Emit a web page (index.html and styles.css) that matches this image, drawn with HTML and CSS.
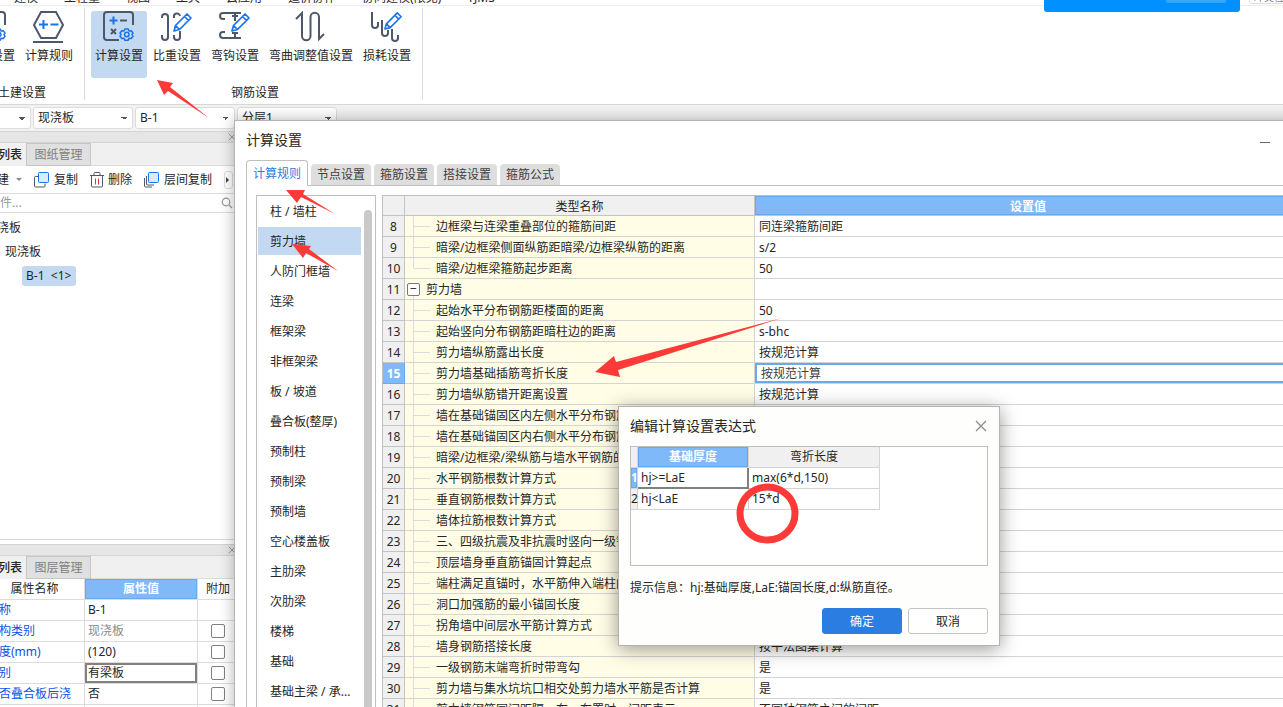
FILE: index.html
```html
<!DOCTYPE html>
<html lang="zh-CN">
<head>
<meta charset="utf-8">
<title>计算设置</title>
<link rel="stylesheet" href="styles.css">
</head>
<body>
<svg class="defs" aria-hidden="true">
  <defs>
    <symbol id="i-calc" viewBox="0 0 32 32">
      <g fill="none" stroke="#4e586b" stroke-width="2">
        <path d="M30 14V4a3 3 0 0 0-3-3H4a3 3 0 0 0-3 3v22a3 3 0 0 0 3 3h12"/>
        <path d="M17 9.500h7M8 18l5 5M13 18l-5 5"/>
      </g>
      <path d="M10.500 5.500v8M6.500 9.500h8" stroke="#1a73e8" stroke-width="2"/>
      <g fill="none" stroke="#1a73e8" stroke-width="1.500">
        <path d="M23.500 18l1.600 0 1 2 2.200-.3 1.700 2.300-1 1.500 1 1.700-1.700 2.300-2.200-.2-1 2h-3.200l-1-2-2.200.2-1.700-2.300 1-1.700-1-1.500 1.700-2.300 2.200.3 1-2z"/>
        <circle cx="23.800" cy="23.500" r="2.200"/>
      </g>
    </symbol>
    <symbol id="i-rule" viewBox="0 0 32 32">
      <path d="M8 1h15l7 13-7 13H8L1 14z" fill="none" stroke="#4e586b" stroke-width="2"/>
      <path d="M0 31h30" stroke="#4e586b" stroke-width="2"/>
      <path d="M6 13.500h9M10.500 9v9M17.500 13.500h8" stroke="#1a73e8" stroke-width="2"/>
    </symbol>
    <symbol id="i-pen" viewBox="0 0 20 20">
      <path d="M1 19l1.500-5.500L14 2l4 4L6.500 17.500z M11.500 4.500l4 4 M2.500 13.500l4 4" fill="#fff" stroke="#1a73e8" stroke-width="1.700" stroke-linejoin="round"/>
    </symbol>
    <symbol id="i-weight" viewBox="0 0 32 32">
      <path d="M1 7V6a3 3 0 0 1 6 0v20a3 3 0 0 1-6 0v-2M13 7V6a3 3 0 0 1 6-1M13 24v2a3 3 0 0 0 6 0v-6" fill="none" stroke="#4e586b" stroke-width="2"/>
      <use href="#i-pen" x="12" y="1" width="20" height="20"/>
    </symbol>
    <symbol id="i-hook" viewBox="0 0 32 32">
      <path d="M6 8H4a3 3 0 0 1 0-6h18M6 21H4a3 3 0 0 0 0 6h18M16 3v7M13 5h6M16 22v5M13 22h6" fill="none" stroke="#4e586b" stroke-width="2"/>
      <use href="#i-pen" x="12" y="1" width="20" height="20"/>
    </symbol>
    <symbol id="i-bend" viewBox="0 0 32 32">
      <path d="M1 8l6-6v23a4 4 0 0 0 8.500 0V6a4 4 0 0 1 8.500 0v22l5-5" fill="none" stroke="#4e586b" stroke-width="2"/>
    </symbol>
    <symbol id="i-loss" viewBox="0 0 32 32">
      <path d="M1 1v13a3 3 0 0 0 6 0v-3M11 9v13a3 3 0 0 0 6 0v-3M21 18v9a3 3 0 0 0 6 0v-3" fill="none" stroke="#4e586b" stroke-width="2"/>
      <use href="#i-pen" x="13" y="0" width="19" height="19"/>
    </symbol>
    <symbol id="i-copy" viewBox="0 0 16 16">
      <path d="M4 4.500H1.500a1 1 0 0 0-1 1V14a1 1 0 0 0 1 1H10a1 1 0 0 0 1-1v-2.500" fill="none" stroke="#4e586b"/>
      <rect x="4.500" y=".5" width="10" height="10" rx="1" fill="#dbeafc" stroke="#1a73e8"/>
    </symbol>
    <symbol id="i-copies" viewBox="0 0 16 16">
      <path d="M.5 6v8a1 1 0 0 0 1 1H8M2.500 4v8a1 1 0 0 0 1 1H10" fill="none" stroke="#4e586b"/>
      <rect x="4.500" y=".5" width="10" height="10" rx="1" fill="#dbeafc" stroke="#1a73e8"/>
    </symbol>
    <symbol id="i-trash" viewBox="0 0 14 16">
      <path d="M0 3.500h14M4 3V1.500a1 1 0 0 1 1-1h4a1 1 0 0 1 1 1V3M1.500 3.500V14a1 1 0 0 0 1 1h9a1 1 0 0 0 1-1V3.500" fill="none" stroke="#4e586b"/>
      <path d="M5.500 6.500v6M8.500 6.500v6" stroke="#e03535"/>
    </symbol>
    <symbol id="i-close" viewBox="0 0 12 12">
      <path d="M1 1l10 10M11 1L1 11" stroke="#8a8a8a" stroke-width="1.200"/>
    </symbol>
  </defs>
</svg>

<div class="app">
  <nav class="menu">
    <span>建模</span><span>工程量</span><span>视图</span><span>工具</span><span>云应用</span><span>造价协作</span><span>协同建模(限免)</span><span>YJMS</span>
  </nav>
  <div class="promo"><span></span></div>
  <div class="promo-tag">冲突检</div>

  <div class="ribbon">
    <section class="group">
      <div class="tools">
        <button class="tool"><svg><use href="#i-calc"/></svg>计算设置</button>
        <button class="tool"><svg><use href="#i-rule"/></svg>计算规则</button>
      </div>
      <h2 class="group-title">土建设置</h2>
    </section>
    <section class="group">
      <div class="tools">
        <button class="tool on"><svg><use href="#i-calc"/></svg>计算设置</button>
        <button class="tool"><svg><use href="#i-weight"/></svg>比重设置</button>
        <button class="tool"><svg><use href="#i-hook"/></svg>弯钩设置</button>
        <button class="tool"><svg><use href="#i-bend"/></svg>弯曲调整值设置</button>
        <button class="tool"><svg><use href="#i-loss"/></svg>损耗设置</button>
      </div>
      <h2 class="group-title">钢筋设置</h2>
    </section>
  </div>

  <div class="combos">
    <select aria-label="楼层"><option></option></select>
    <select aria-label="构件类型"><option>现浇板</option></select>
    <select aria-label="构件"><option>B-1</option></select>
    <select aria-label="分层"><option>分层1</option></select>
  </div>

  <aside class="side">
    <section class="panel grow">
      <div class="grip"><svg><use href="#i-close"/></svg></div>
      <div class="ptabs"><button class="active">构件列表</button><button>图纸管理</button></div>
      <div class="toolbar">
        <button>新建<i class="caret"></i></button>
        <button><svg><use href="#i-copy"/></svg>复制</button>
        <button><svg class="trash"><use href="#i-trash"/></svg>删除</button>
        <button><svg><use href="#i-copies"/></svg>层间复制</button>
        <button class="more" aria-label="更多"><i></i></button>
      </div>
      <div class="search">
        <input type="text" placeholder="搜索构件..." aria-label="搜索构件">
        <svg viewBox="0 0 12 12"><circle cx="5" cy="5" r="3.800" fill="none" stroke="#999" stroke-width="1.200"/><path d="M8 8l3 3" stroke="#999" stroke-width="1.200"/></svg>
      </div>
      <ul class="tree">
        <li class="l0">现浇板</li>
        <li class="l1"><i class="caret"></i>现浇板</li>
        <li class="l2"><span>B-1 &nbsp;&lt;1&gt;</span></li>
      </ul>
    </section>
    <section class="panel props">
      <div class="grip"><svg><use href="#i-close"/></svg></div>
      <div class="ptabs"><button class="active">属性列表</button><button>图层管理</button></div>
      <table class="ptable">
        <thead><tr><th>属性名称</th><th class="sel">属性值</th><th>附加</th></tr></thead>
        <tbody>
          <tr><td>名称</td><td>B-1</td><td></td></tr>
          <tr><td>结构类别</td><td class="dim">现浇板</td><td><input type="checkbox" aria-label="结构类别附加"></td></tr>
          <tr><td>厚度(mm)</td><td>(120)</td><td><input type="checkbox" aria-label="厚度附加"></td></tr>
          <tr><td>类别</td><td class="cur">有梁板</td><td><input type="checkbox" aria-label="类别附加"></td></tr>
          <tr><td>是否叠合板后浇</td><td>否</td><td><input type="checkbox" aria-label="叠合板后浇附加"></td></tr>
          <tr><td></td><td></td><td></td></tr>
        </tbody>
      </table>
    </section>
  </aside>
</div>

<div class="window" role="dialog" aria-label="计算设置">
  <header class="wtitle"><h1>计算设置</h1><button aria-label="最小化"><i></i></button></header>
  <div class="wtabs">
    <button class="active">计算规则</button><button>节点设置</button><button>箍筋设置</button><button>搭接设置</button><button>箍筋公式</button>
  </div>
  <div class="wbody">
    <div class="listbox">
      <ul>
        <li>柱 / 墙柱</li><li class="on">剪力墙</li><li>人防门框墙</li><li>连梁</li><li>框架梁</li><li>非框架梁</li><li>板 / 坡道</li><li>叠合板(整厚)</li><li>预制柱</li><li>预制梁</li><li>预制墙</li><li>空心楼盖板</li><li>主肋梁</li><li>次肋梁</li><li>楼梯</li><li>基础</li><li>基础主梁 / 承...</li>
      </ul>
      <div class="thumb"></div>
    </div>
    <table class="grid">
      <colgroup><col class="c-no"><col class="c-name"><col></colgroup>
      <thead><tr><th></th><th>类型名称</th><th class="sel">设置值</th></tr></thead>
      <tbody>
        <tr><th>8</th><td>边框梁与连梁重叠部位的箍筋间距</td><td>同连梁箍筋间距</td></tr>
        <tr><th>9</th><td>暗梁/边框梁侧面纵筋距暗梁/边框梁纵筋的距离</td><td>s/2</td></tr>
        <tr class="last"><th>10</th><td>暗梁/边框梁箍筋起步距离</td><td>50</td></tr>
        <tr class="parent"><th>11</th><td><button class="fold" aria-label="折叠">−</button>剪力墙</td><td></td></tr>
        <tr><th>12</th><td>起始水平分布钢筋距楼面的距离</td><td>50</td></tr>
        <tr><th>13</th><td>起始竖向分布钢筋距暗柱边的距离</td><td>s-bhc</td></tr>
        <tr><th>14</th><td>剪力墙纵筋露出长度</td><td>按规范计算</td></tr>
        <tr class="cur"><th>15</th><td>剪力墙基础插筋弯折长度</td><td>按规范计算</td></tr>
        <tr><th>16</th><td>剪力墙纵筋错开距离设置</td><td>按规范计算</td></tr>
        <tr><th>17</th><td>墙在基础锚固区内左侧水平分布钢筋</td><td></td></tr>
        <tr><th>18</th><td>墙在基础锚固区内右侧水平分布钢筋</td><td></td></tr>
        <tr><th>19</th><td>暗梁/边框梁/梁纵筋与墙水平钢筋的</td><td></td></tr>
        <tr><th>20</th><td>水平钢筋根数计算方式</td><td></td></tr>
        <tr><th>21</th><td>垂直钢筋根数计算方式</td><td></td></tr>
        <tr><th>22</th><td>墙体拉筋根数计算方式</td><td></td></tr>
        <tr><th>23</th><td>三、四级抗震及非抗震时竖向一级钢</td><td></td></tr>
        <tr><th>24</th><td>顶层墙身垂直筋锚固计算起点</td><td></td></tr>
        <tr><th>25</th><td>端柱满足直锚时，水平筋伸入端柱内</td><td></td></tr>
        <tr><th>26</th><td>洞口加强筋的最小锚固长度</td><td></td></tr>
        <tr><th>27</th><td>拐角墙中间层水平筋计算方式</td><td></td></tr>
        <tr><th>28</th><td>墙身钢筋搭接长度</td><td>按平法图集计算</td></tr>
        <tr><th>29</th><td>一级钢筋末端弯折时带弯勾</td><td>是</td></tr>
        <tr><th>30</th><td>剪力墙与集水坑坑口相交处剪力墙水平筋是否计算</td><td>是</td></tr>
        <tr><th>31</th><td>剪力墙钢筋同间距隔一布一布置时，间距表示</td><td>不同种钢筋之间的间距</td></tr>
      </tbody>
    </table>
  </div>
</div>

<div class="modal" role="dialog" aria-label="编辑计算设置表达式">
  <header><h2>编辑计算设置表达式</h2><button aria-label="关闭"><svg><use href="#i-close"/></svg></button></header>
  <div class="exprbox">
    <table class="expr">
      <thead><tr><th class="no"></th><th class="sel">基础厚度</th><th>弯折长度</th></tr></thead>
      <tbody>
        <tr><th class="no sel">1</th><td class="cur">hj&gt;=LaE</td><td>max(6*d,150)</td></tr>
        <tr><th class="no">2</th><td>hj&lt;LaE</td><td>15*d</td></tr>
      </tbody>
    </table>
  </div>
  <p>提示信息：hj:基础厚度,LaE:锚固长度,d:纵筋直径。</p>
  <footer><button class="primary">确定</button><button>取消</button></footer>
</div>

<svg class="marks" aria-hidden="true">
  <g fill="#fc3a37">
    <path d="M157 80l16 3-3 4 39 31-41-27-4 4z"/>
    <path d="M286 190h19l-2 4 32 20-34-17-4 6z"/>
    <path d="M292 244l19 2-2 3 29 22-32-18-3 5z"/>
    <path d="M595 372l19-16 2 6 166-44-164 52 2 7z"/>
  </g>
  <ellipse cx="767.500" cy="513.500" rx="27.500" ry="26.500" fill="none" stroke="#fc3a37" stroke-width="7"/>
</svg>
</body>
</html>
```

FILE: styles.css
```css
* { box-sizing: border-box; }
html, body { height: 100%; }
body {
  margin: 0;
  position: relative;
  overflow: hidden;
  background: #fff;
  color: #262626;
  font: 12px/20px "Noto Sans", "Noto Sans CJK SC", sans-serif;
}
h1, h2, p, ul { margin: 0; padding: 0; font-weight: 400; }
ul { list-style: none; }
button, input, select { font: inherit; color: inherit; }
button { background: none; border: 0; padding: 0; white-space: nowrap; }
table { border-collapse: separate; border-spacing: 0; table-layout: fixed; }
.defs { position: absolute; width: 0; height: 0; }

/* The main window runs past the top and left edges of the viewport */
.app {
  display: flex;
  flex-direction: column;
  margin: -12px 0 0 -40px;
  height: calc(100% + 12px);
}

.menu {
  display: flex;
  gap: 26px;
  height: 18px;
  flex: none;
  padding-left: 54px;
  line-height: 20px;
  border-bottom: 1px solid #ededed;
  white-space: nowrap;
}
.promo {
  position: absolute;
  top: 0;
  right: 43px;
  width: 196px;
  height: 12px;
  background: #0090ff;
  border-radius: 0 0 3px 3px;
}
.promo span {
  display: block;
  width: 60px;
  height: 3px;
  margin-left: 122px;
  background: #33a6ff;
  border-radius: 0 0 2px 2px;
}
.promo-tag {
  position: absolute;
  top: -12px;
  right: -6px;
  width: 40px;
  height: 16px;
  border: 1px solid #ddd;
  border-radius: 3px;
  background: #fff;
  color: #777;
  font-size: 10px;
  line-height: 16px;
  padding-left: 4px;
  overflow: hidden;
}

.ribbon {
  display: flex;
  flex: none;
  height: 99px;
  padding: 2px 0 4px;
  border-bottom: 1px solid #d8d8d8;
}
.group {
  display: flex;
  flex-direction: column;
  justify-content: space-between;
  padding: 3px 7px 0 6px;
  border-right: 1px solid #dcdcdc;
}
.group:first-child { padding-left: 3px; }
.tools { display: flex; gap: 2px; }
.tool {
  display: flex;
  flex-direction: column;
  align-items: center;
  height: 67px;
  padding: 0 4px;
  border-radius: 3px;
  line-height: 24px;
}
.tool svg { width: 32px; height: 32px; margin-bottom: 1px; }
.tool.on { background: #c2d9f1; }
.group-title { padding-left: 4px; font-size: 12px; line-height: 14px; text-align: center; }

.combos {
  display: flex;
  flex: none;
  gap: 2px;
  height: 26px;
  padding: 2px 0;
  background: #f2f2f2;
}
.combos select {
  appearance: none;
  width: 100px;
  height: 22px;
  padding: 0 4px;
  border: 1px solid #dcdcdc;
  border-radius: 3px;
  color: #262626;
  line-height: 20px;
  background:
    linear-gradient(to bottom left, #555 50%, transparent 50%) right 8px center / 3px 3px no-repeat,
    linear-gradient(to bottom right, #555 50%, transparent 50%) right 5px center / 3px 3px no-repeat,
    #fff;
}
.combos select:first-child { width: 71px; }

.side {
  display: flex;
  flex-direction: column;
  flex: 1;
  min-height: 0;
  width: 276px;
}
.panel { display: flex; flex-direction: column; background: #fff; }
.panel.grow { flex: 1; border-bottom: 1px solid #d8d8d8; }
.props { margin-top: 4px; height: 163px; flex: none; overflow: hidden; }
.grip {
  display: flex;
  justify-content: flex-end;
  align-items: center;
  flex: none;
  height: 12px;
  border-top: 1px solid #d4d4d4;
  border-bottom: 1px solid #d4d4d4;
  background: #e6e6e6;
}
.grip svg { width: 8px; height: 8px; }
.ptabs { display: flex; flex: none; height: 23px; background: #f0f0f0; border-bottom: 1px solid #dcdcdc; }
.ptabs button {
  width: 65px;
  height: 23px;
  background: #e0e0e0;
  border: 1px solid #c6c6c6;
  color: #808080;
}
.ptabs .active { width: 66px; padding-left: 10px; background: #f0f0f0; border-color: #f0f0f0; color: #262626; font-weight: 500; }
.toolbar {
  display: flex;
  align-items: center;
  gap: 12px;
  flex: none;
  height: 28px;
  padding-left: 25px;
  border-bottom: 1px solid #dcdcdc;
}
.toolbar button { display: flex; align-items: center; gap: 4px; }
.toolbar svg { width: 16px; height: 16px; }
.toolbar .trash { width: 14px; }
.caret { border: 3px solid transparent; border-top-color: #888; border-bottom: 0; margin-left: 3px; }
.toolbar .more { padding: 5px 3px 5px 1px; border: 1px solid #ddd; border-radius: 3px; }
.more i { border: 3px solid transparent; border-left-color: #444; border-right: 0; }
.search { display: flex; align-items: center; flex: none; height: 19px; border-bottom: 1px solid #dcdcdc; padding-right: 3px; }
.search input { flex: 1; min-width: 0; border: 0; outline: 0; padding: 0 0 0 4px; background: none; line-height: 16px; }
.search input::placeholder { color: #999; }
.search svg { width: 12px; height: 12px; }
.tree { padding-top: 3px; }
.tree li { display: flex; align-items: center; height: 24px; }
.l0 { padding-left: 25px; }
.l1 { padding-left: 32px; }
.l1 .caret { margin: 0 7px 0 0; }
.l2 { padding-left: 62px; }
.l2 span { padding: 0 5px 0 4px; background: #c2d9f1; border-radius: 3px; }

.ptable { width: 274px; }
.ptable th, .ptable td {
  height: 21px;
  padding: 0 3px;
  border-right: 1px solid #dcdcdc;
  border-bottom: 1px solid #dcdcdc;
  line-height: 20px;
  font-weight: 400;
  white-space: nowrap;
}
.ptable th:first-child { width: 125px; padding-left: 28px; }
.ptable th:nth-child(2) { width: 113px; }
.ptable th:nth-child(3) { width: 37px; padding: 0 0 0 4px; }
.ptable .sel, .grid .sel, .expr .sel { background: #80b9fa; color: #fff; font-weight: 700; box-shadow: inset 0 0 0 1px #6aa8ec; }
.ptable td:first-child { color: #0a53e8; padding-left: 27px; }
.ptable .dim { color: #8c8c8c; }
.ptable .cur { box-shadow: inset 0 0 0 2px #808080; }
.ptable td:last-child { text-align: center; line-height: 0; padding-left: 6px; }
.ptable input {
  appearance: none;
  width: 14px;
  height: 14px;
  margin: 0;
  border: 1px solid #808080;
  border-radius: 2px;
  background: #fff;
}

/* Settings window, floating over the main window and cut off by the right edge */
.window {
  position: absolute;
  display: flex;
  flex-direction: column;
  top: 120px;
  left: 234px;
  right: -30px;
  bottom: -20px;
  background: #fff;
  border: 1px solid #b4b4b4;
  box-shadow: 0 0 14px rgba(0, 0, 0, .3);
  overflow: hidden;
}
.wtitle { display: flex; justify-content: space-between; flex: none; height: 39px; padding: 0 42px 0 11px; }
.wtitle h1 { font-size: 14px; line-height: 38px; }
.wtitle button { display: flex; align-items: center; padding-top: 4px; }
.wtitle i { width: 10px; height: 1px; background: #666; }
.wtabs {
  display: flex;
  align-items: flex-end;
  gap: 3px;
  flex: none;
  height: 26px;
  padding-left: 11px;
  background: linear-gradient(#bfbfbf, #bfbfbf) 11px 100% / 100% 1px no-repeat;
}
.wtabs button {
  width: 60px;
  height: 21px;
  margin-bottom: 1px;
  background: #dedede;
  border-radius: 4px 4px 0 0;
  color: #404040;
}
.wtabs .active {
  width: 62px;
  height: 26px;
  margin-bottom: 0;
  background: #fff;
  border: 1px solid #bfbfbf;
  border-bottom: 0;
  color: #2a7de1;
}
.wbody { display: flex; gap: 6px; flex: 1; min-height: 0; margin-left: 11px; padding: 9px 10px 0 9px; border-left: 1px solid #bfbfbf; }
.listbox {
  display: flex;
  justify-content: space-between;
  flex: none;
  width: 120px;
  padding: 1px 3px 0 1px;
  border: 1px solid #bfbfbf;
  overflow: hidden;
}
.listbox ul { width: 103px; }
.listbox li { height: 28px; margin: 0 0 2px; padding-left: 12px; line-height: 30px; white-space: nowrap; }
.listbox .on { background: #c2d9f1; }
.thumb { width: 8px; margin-top: 13px; background: #c9c9c9; border-radius: 4px 4px 0 0; }

.grid { flex: 1; align-self: flex-start; border-left: 1px solid #bfbfbf; border-top: 1px solid #bfbfbf; }
.c-no { width: 22px; }
.c-name { width: 350px; }
.grid th, .grid td {
  height: 21px;
  padding: 2px 0 0 4px;
  border-right: 1px solid #d4d4d4;
  border-bottom: 1px solid #d4d4d4;
  line-height: 18px;
  text-align: left;
  font-weight: 400;
  white-space: nowrap;
  overflow: hidden;
}
.grid th { padding: 2px 0 0; background: #f0f0f0; border-color: #c4c4c4; text-align: center; }
.grid thead th { height: 20px; line-height: 17px; }
.grid td:nth-child(2) {
  padding-left: 31px;
  background:
    linear-gradient(#dcdcdc, #dcdcdc) 8px 0 / 1px 100% no-repeat,
    linear-gradient(#dcdcdc, #dcdcdc) 9px 10px / 16px 1px no-repeat,
    #fffde6;
}
.grid .last td:nth-child(2) { background-size: 1px 10px, 16px 1px, auto; }
.grid .parent td:nth-child(2) {
  padding-left: 2px;
  background: linear-gradient(#dcdcdc, #dcdcdc) 8px 16px / 1px 5px no-repeat, #fffde6;
}
.fold {
  width: 13px;
  height: 13px;
  margin-right: 6px;
  border: 1px solid #777;
  border-radius: 2px;
  background: #fff;
  line-height: 10px;
  vertical-align: 1px;
}
.grid .cur th { background: #80b9fa; color: #fff; font-weight: 700; border-color: #6aa8ec; }
.grid .cur td:last-child { padding-left: 6px; color: #404040; box-shadow: inset 0 0 0 2px #6ba9e8; }

/* Expression editor */
.modal {
  position: absolute;
  top: 406px;
  left: 618px;
  width: 382px;
  padding: 0 11px 11px;
  background: #fefefd;
  border: 1px solid #b4b4b4;
  box-shadow: 0 3px 18px rgba(0, 0, 0, .4);
}
.modal header { display: flex; justify-content: space-between; align-items: center; height: 39px; padding: 0 1px 2px 0; }
.modal h2 { font-size: 14px; }
.modal header svg { display: block; width: 12px; height: 12px; }
.exprbox { height: 120px; border: 1px solid #bfbfbf; background: #fff; }
.expr { width: 249px; }
.expr th, .expr td {
  height: 21px;
  padding: 0 3px;
  border-right: 1px solid #d4d4d4;
  border-bottom: 1px solid #d4d4d4;
  line-height: 20px;
  text-align: left;
  font-weight: 400;
}
.expr th { background: #f0f0f0; text-align: center; }
.expr thead th { width: 131px; }
.expr thead .sel { width: 111px; }
.expr .no, .expr thead .no { width: 7px; padding: 0; }
.expr .cur { padding: 0 3px; box-shadow: inset -1px -1px #808080; border-color: #808080; }
.modal p { padding: 12px 0 10px; line-height: 20px; white-space: nowrap; }
.modal footer { display: flex; justify-content: flex-end; gap: 6px; }
.modal footer button { width: 80px; height: 26px; padding-top: 1px; border: 1px solid #c4c4c4; border-radius: 3px; background: #fff; }
.modal footer .primary { background: #2b7de1; border-color: #2b7de1; color: #fff; }

.marks { position: absolute; inset: 0; width: 100%; height: 100%; pointer-events: none; }
```
